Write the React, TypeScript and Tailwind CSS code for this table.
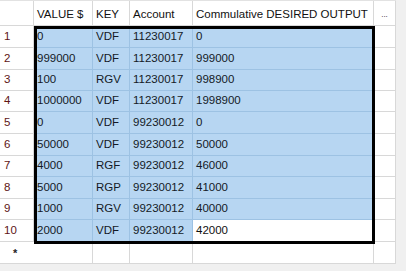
const rows = [
  { n: "1", value: "0", key: "VDF", account: "11230017", out: "0" },
  { n: "2", value: "999000", key: "VDF", account: "11230017", out: "999000" },
  { n: "3", value: "100", key: "RGV", account: "11230017", out: "998900" },
  { n: "4", value: "1000000", key: "VDF", account: "11230017", out: "1998900" },
  { n: "5", value: "0", key: "VDF", account: "99230012", out: "0" },
  { n: "6", value: "50000", key: "VDF", account: "99230012", out: "50000" },
  { n: "7", value: "4000", key: "RGF", account: "99230012", out: "46000" },
  { n: "8", value: "5000", key: "RGP", account: "99230012", out: "41000" },
  { n: "9", value: "1000", key: "RGV", account: "99230012", out: "40000" },
  { n: "10", value: "2000", key: "VDF", account: "99230012", out: "42000" },
];

// row pitch in the shot is ~21.5px, so heights alternate
const tall = [true, true, false, false, true, true, false, true, false, true];

const sel = "bg-[#b7d6f2] border-r border-b border-[#9dc2e3] text-[#141a26]";
const plain = "bg-white border-r border-b border-[#d8d8d8] text-[#111]";

const Cell = ({ w, cls, children }: { w: string; cls: string; children?: React.ReactNode }) => (
  <div className={`${w} ${cls} flex items-center pl-[3px] whitespace-nowrap overflow-hidden`}>{children}</div>
);

export default function App() {
  return (
    <div
      className="w-[406px] h-[271px] bg-[#f0f0f0] overflow-hidden text-[11.5px] leading-none"
      style={{ fontFamily: '"Liberation Sans", Arial, sans-serif' }}
    >
      <div className="relative w-[396px] border-t border-[#e2e2e2]">
        {/* header */}
        <div className="flex h-[25px] text-[#1b1b1b]">
          <div className="w-[34px] bg-white border-r border-b border-[#d8d8d8]" />
          <Cell w="w-[59px]" cls={plain + " pt-[3px]"}>VALUE $</Cell>
          <Cell w="w-[37px]" cls={plain + " pt-[3px]"}>KEY</Cell>
          <Cell w="w-[63px]" cls={plain + " pt-[3px]"}>Account</Cell>
          <Cell w="w-[181px]" cls={plain + " pt-[3px]"}>Commulative DESIRED OUTPUT</Cell>
          <div className="w-[22px] bg-white border-r border-b border-[#d8d8d8] flex items-center justify-center pt-[3px] text-[8px]">
            ...
          </div>
        </div>

        {rows.map((r, i) => {
          const last = i === rows.length - 1;
          return (
            <div key={r.n} className={`flex ${tall[i] ? "h-[22px]" : "h-[21px]"}`}>
              <div className="w-[34px] bg-white border-r border-b border-[#d8d8d8] flex items-center pl-[4px] text-[#5e1515]">
                {r.n}
              </div>
              <Cell w="w-[59px]" cls={sel}>{r.value}</Cell>
              <Cell w="w-[37px]" cls={sel}>{r.key}</Cell>
              <Cell w="w-[63px]" cls={sel}>{r.account}</Cell>
              <Cell w="w-[181px]" cls={last ? plain : sel}>{r.out}</Cell>
              <div className="w-[22px] bg-white border-r border-b border-[#d8d8d8]" />
            </div>
          );
        })}

        {/* new row */}
        <div className="flex h-[22px]">
          <div className="w-[34px] bg-white border-b border-[#d8d8d8] flex items-start pl-[13px] pt-[6px] text-[11px] font-bold text-[#222]">
            *
          </div>
          <div className="w-[59px] bg-white border-r border-b border-[#d8d8d8]" />
          <div className="w-[37px] bg-white border-r border-b border-[#d8d8d8]" />
          <div className="w-[63px] bg-white border-r border-b border-[#d8d8d8]" />
          <div className="w-[181px] bg-white border-r border-b border-[#d8d8d8]" />
          <div className="w-[22px] bg-white border-r border-b border-[#d8d8d8]" />
        </div>

        {/* selection frame */}
        <div className="absolute left-[34px] top-[25px] w-[341px] h-[218px] border-[3px] border-black pointer-events-none" />
      </div>
    </div>
  );
}
